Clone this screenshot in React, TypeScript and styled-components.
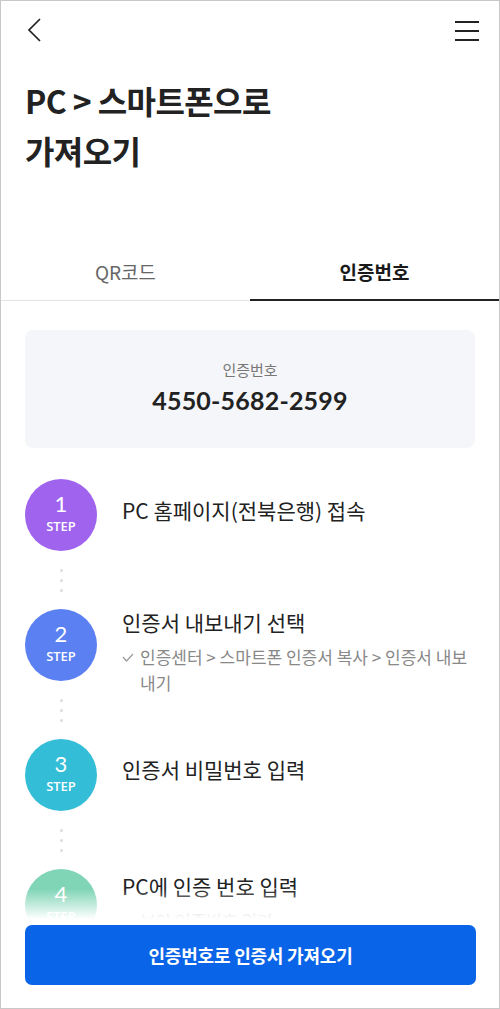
import React from "react";
import styled, { createGlobalStyle } from "styled-components";

const Global = createGlobalStyle`
  html, body { margin: 0; padding: 0; background: #fff; }
  body { font-family: "Noto Sans CJK KR", "Noto Sans", sans-serif; color: #222; }
  * { box-sizing: border-box; }
`;

const Frame = styled.div`
  position: relative;
  width: 500px;
  height: 100vh;
  border: 1px solid #c8c8c8;
  overflow: hidden;
  background: #fff;
`;

const TopBar = styled.header`
  height: 58px;
  display: flex;
  align-items: center;
  justify-content: space-between;
  padding: 0 20px 0 26px;
`;

const IconButton = styled.button`
  border: 0;
  background: none;
  padding: 0;
  display: flex;
  align-items: center;
  justify-content: center;
  cursor: pointer;
`;

const Title = styled.h1`
  margin: 16px 0 69px;
  padding: 0 24px;
  font-size: 32px;
  line-height: 50px;
  font-weight: 700;
  letter-spacing: -0.6px;
  color: #222;
`;

const Tabs = styled.div`
  display: grid;
  grid-template-columns: 1fr 1fr;
  border-bottom: 1px solid #e3e3e3;
`;

const Tab = styled.div<{ $active?: boolean }>`
  height: 57px;
  display: flex;
  align-items: center;
  justify-content: center;
  padding-bottom: 1px;
  font-size: 19px;
  font-weight: ${(p) => (p.$active ? 700 : 400)};
  color: ${(p) => (p.$active ? "#1a1a1a" : "#666")};
  border-bottom: 2px solid ${(p) => (p.$active ? "#222" : "transparent")};
  margin-bottom: -1px;
`;

const Content = styled.main`
  padding: 29px 24px 0;
`;

const CodeCard = styled.section`
  background: #f5f6f9;
  border-radius: 8px;
  padding: 29px 0 32px;
  display: flex;
  flex-direction: column;
  align-items: center;
  gap: 3px;
`;

const CodeLabel = styled.div`
  font-size: 15px;
  line-height: 22px;
  color: #777;
`;

const CodeNumber = styled.div`
  font-family: Lato, "Noto Sans", sans-serif;
  font-size: 25px;
  line-height: 32px;
  font-weight: 700;
  color: #222;
  letter-spacing: 0.2px;
`;

const Steps = styled.ol`
  list-style: none;
  margin: 31px 0 0;
  padding: 0;
`;

const StepRow = styled.li`
  display: grid;
  grid-template-columns: 72px 1fr;
  column-gap: 25px;
  align-items: start;
`;

const Rail = styled.div`
  display: flex;
  flex-direction: column;
  align-items: center;
`;

const Circle = styled.div<{ $color: string }>`
  width: 72px;
  height: 72px;
  border-radius: 50%;
  background: ${(p) => p.$color};
  color: #fff;
  display: flex;
  flex-direction: column;
  align-items: center;
  justify-content: center;
  padding-bottom: 2px;
`;

const StepNum = styled.span`
  font-family: Lato, "Noto Sans", sans-serif;
  font-size: 22px;
  line-height: 22px;
  font-weight: 400;
`;

const StepLabel = styled.span`
  font-family: "Open Sans", "Noto Sans", sans-serif;
  font-size: 13px;
  line-height: 18px;
  font-weight: 600;
  margin-top: 2px;
`;

const Connector = styled.div`
  height: 58px;
  display: flex;
  flex-direction: column;
  align-items: center;
  justify-content: center;
  gap: 7px;
`;

const Dot = styled.span`
  width: 3px;
  height: 3px;
  border-radius: 50%;
  background: #dcdcdc;
`;

const StepText = styled.div<{ $top: number }>`
  margin-top: ${(p) => p.$top}px;
`;

const StepTitle = styled.div`
  font-size: 21px;
  line-height: 32px;
  color: #222;
  letter-spacing: 0;
`;

const StepNote = styled.div`
  display: flex;
  gap: 6px;
  margin-top: 6px;
  font-size: 17px;
  line-height: 26px;
  color: #888;
  letter-spacing: 0;
  svg { flex: none; margin-top: 9px; }
`;

const BottomBar = styled.div`
  position: absolute;
  left: 0;
  right: 0;
  bottom: 0;
  padding: 6px 23px 23px 24px;
  background: #fff;
  &::before {
    content: "";
    position: absolute;
    left: 0;
    right: 0;
    bottom: 100%;
    height: 30px;
    background: linear-gradient(to bottom, rgba(255,255,255,0), #fff);
  }
`;

const PrimaryButton = styled.button`
  width: 100%;
  height: 60px;
  border: 0;
  border-radius: 7px;
  background: #0a64e8;
  color: #fff;
  font-family: "Noto Sans CJK KR", sans-serif;
  font-size: 18px;
  font-weight: 700;
  letter-spacing: -0.2px;
  cursor: pointer;
`;

const Check = () => (
  <svg width="12" height="9" viewBox="0 0 12 9" fill="none">
    <polyline points="1,4 4.5,8 11,1" stroke="#999" strokeWidth="1.2" />
  </svg>
);

type Step = { color: string; title: string; note?: string; top: number };

const steps: Step[] = [
  { color: "#9f63ee", title: "PC 홈페이지(전북은행) 접속", top: 15 },
  {
    color: "#5a80f2",
    title: "인증서 내보내기 선택",
    note: "인증센터 > 스마트폰 인증서 복사 > 인증서 내보내기",
    top: -3,
  },
  { color: "#33bdd6", title: "인증서 비밀번호 입력", top: 14 },
  { color: "#80d5b7", title: "PC에 인증 번호 입력", note: "보안 인증번호 입력", top: 1 },
];

export default function App() {
  return (
    <>
      <Global />
      <Frame>
        <TopBar>
          <IconButton aria-label="뒤로">
            <svg width="14" height="24" viewBox="0 0 14 24" fill="none">
              <polyline points="13,1 2,12 13,23" stroke="#222" strokeWidth="1.7" />
            </svg>
          </IconButton>
          <IconButton aria-label="메뉴">
            <svg width="24" height="22" viewBox="0 0 24 22" fill="none">
              <line x1="0" y1="3" x2="24" y2="3" stroke="#222" strokeWidth="2" />
              <line x1="0" y1="12" x2="24" y2="12" stroke="#222" strokeWidth="2" />
              <line x1="0" y1="21" x2="24" y2="21" stroke="#222" strokeWidth="2" />
            </svg>
          </IconButton>
        </TopBar>
        <Title>
          PC &gt; 스마트폰으로
          <br />
          가져오기
        </Title>
        <Tabs>
          <Tab>QR코드</Tab>
          <Tab $active>인증번호</Tab>
        </Tabs>
        <Content>
          <CodeCard>
            <CodeLabel>인증번호</CodeLabel>
            <CodeNumber>4550-5682-2599</CodeNumber>
          </CodeCard>
          <Steps>
            {steps.map((s, i) => (
              <StepRow key={i}>
                <Rail>
                  <Circle $color={s.color}>
                    <StepNum>{i + 1}</StepNum>
                    <StepLabel>STEP</StepLabel>
                  </Circle>
                  <Connector>
                    <Dot />
                    <Dot />
                    <Dot />
                  </Connector>
                </Rail>
                <StepText $top={s.top}>
                  <StepTitle>{s.title}</StepTitle>
                  {s.note && (
                    <StepNote>
                      <Check />
                      <span>{s.note}</span>
                    </StepNote>
                  )}
                </StepText>
              </StepRow>
            ))}
          </Steps>
        </Content>
        <BottomBar>
          <PrimaryButton>인증번호로 인증서 가져오기</PrimaryButton>
        </BottomBar>
      </Frame>
    </>
  );
}
